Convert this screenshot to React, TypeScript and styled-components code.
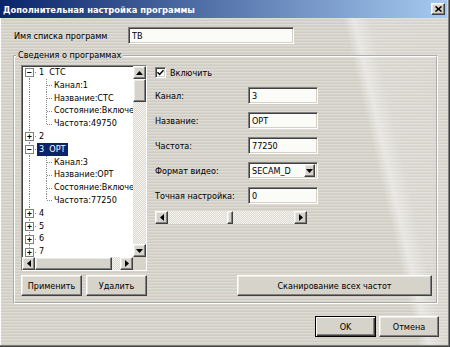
import React from 'react';
import styled, { createGlobalStyle, css } from 'styled-components';

const GlobalStyle = createGlobalStyle`
  html, body {
    margin: 0;
    padding: 0;
    background: #d6d3ca;
  }
  body {
    font-family: "DejaVu Sans Condensed", "DejaVu Sans", sans-serif;
    font-size: 9px;
    color: #000;
  }
`;

const FACE = '#d6d3cb';

const sunken = css`
  border: 1px solid;
  border-color: #808080 #ffffff #ffffff #808080;
  box-shadow: inset 1px 1px 0 #404040, inset -1px -1px 0 #d4d0c8;
`;

const raised = css`
  border: 1px solid;
  border-color: #ffffff #404040 #404040 #ffffff;
  box-shadow: inset -1px -1px 0 #808080, inset 1px 1px 0 #ebe9e3;
`;

const checker = css`
  background: repeating-conic-gradient(#f4f3ef 0 25%, #dcd9d1 0 50%) 0 0 / 2px 2px;
`;

const dotsV = 'repeating-linear-gradient(to bottom, #8a8a8a 0 1px, transparent 1px 2px)';
const dotsH = 'repeating-linear-gradient(to right, #8a8a8a 0 1px, transparent 1px 2px)';

type Channel = {
  num: string;
  name?: string;
  selected?: boolean;
  kids?: string[];
};

const channels: Channel[] = [
  { num: '1', name: 'СТС', kids: ['Канал:1', 'Название:СТС', 'Состояние:Включено', 'Частота:49750'] },
  { num: '2' },
  { num: '3', name: 'ОРТ', selected: true, kids: ['Канал:3', 'Название:ОРТ', 'Состояние:Включено', 'Частота:77250'] },
  { num: '4' },
  { num: '5' },
  { num: '6' },
  { num: '7' },
];

const fields = [
  { label: 'Канал:', value: '3' },
  { label: 'Название:', value: 'ОРТ' },
  { label: 'Частота:', value: '77250' },
];

const Arrow = ({ dir }: { dir: 'up' | 'down' | 'left' | 'right' }) => {
  const pts = {
    up: '0,4 3.5,0 7,4',
    down: '0,0 7,0 3.5,4',
    left: '4,0 4,7 0,3.5',
    right: '0,0 4,3.5 0,7',
  }[dir];
  const vertical = dir === 'up' || dir === 'down';
  return (
    <svg width={vertical ? 7 : 4} height={vertical ? 4 : 7} viewBox={vertical ? '0 0 7 4' : '0 0 4 7'}>
      <polygon points={pts} fill="#000" />
    </svg>
  );
};

const App = () => {
  const tuning = 47; // slider position, percent

  return (
    <>
      <GlobalStyle />
      <Window>
        <TitleBar>
          <TitleText>Дополнительная настройка программы</TitleText>
          <CloseButton>
            <svg width="7" height="6" viewBox="0 0 7 6">
              <path d="M0.5 0.5 L6.5 5.5 M6.5 0.5 L0.5 5.5" stroke="#000" strokeWidth="1.6" />
            </svg>
          </CloseButton>
        </TitleBar>

        <NameRow>
          <NameLabel>Имя списка программ</NameLabel>
          <TextField $w={166} value="ТВ" readOnly />
        </NameRow>

        <Group>
          <Legend>Сведения о программах</Legend>
          <MainRow>
            <TreeBox>
              <TreeList>
                {channels.map((ch, i) => (
                  <React.Fragment key={ch.num}>
                    <TreeRow>
                      <Trunk $fromMid={i === 0} $dash>
                        <Expander>{ch.kids ? '−' : '+'}</Expander>
                      </Trunk>
                      <NodeLabel $selected={ch.selected}>
                        {ch.name ? `${ch.num}  ${ch.name}` : ch.num}
                      </NodeLabel>
                    </TreeRow>
                    {ch.kids?.map((kid, k) => (
                      <TreeRow key={kid}>
                        <Trunk />
                        <Branch $last={k === ch.kids!.length - 1} />
                        <NodeLabel>{kid}</NodeLabel>
                      </TreeRow>
                    ))}
                  </React.Fragment>
                ))}
              </TreeList>
              <VScroll>
                <ArrowBtn>
                  <Arrow dir="up" />
                </ArrowBtn>
                <VThumb />
                <Spacer />
                <ArrowBtn>
                  <Arrow dir="down" />
                </ArrowBtn>
              </VScroll>
              <HScroll>
                <ArrowBtn>
                  <Arrow dir="left" />
                </ArrowBtn>
                <HThumb />
                <Spacer />
                <ArrowBtn>
                  <Arrow dir="right" />
                </ArrowBtn>
              </HScroll>
              <Corner />
            </TreeBox>

            <Details>
              <CheckRow>
                <CheckBox>
                  <svg width="7" height="7" viewBox="0 0 7 7">
                    <path d="M0.5 3.2 L2.6 5.4 L6.5 1.2" stroke="#000" strokeWidth="1.5" fill="none" />
                  </svg>
                </CheckBox>
                Включить
              </CheckRow>
              {fields.map((f) => (
                <Field key={f.label}>
                  <FieldLabel>{f.label}</FieldLabel>
                  <TextField $w={70} value={f.value} readOnly />
                </Field>
              ))}
              <Field>
                <FieldLabel>Формат видео:</FieldLabel>
                <Combo>
                  <ComboText>SECAM_D</ComboText>
                  <ComboButton>
                    <Arrow dir="down" />
                  </ComboButton>
                </Combo>
              </Field>
              <Field>
                <FieldLabel>Точная настройка:</FieldLabel>
                <TextField $w={70} value="0" readOnly />
              </Field>
              <Slider>
                <ArrowBtn>
                  <Arrow dir="left" />
                </ArrowBtn>
                <SliderTrack>
                  <div style={{ width: `${tuning}%` }} />
                  <SliderThumb />
                </SliderTrack>
                <ArrowBtn>
                  <Arrow dir="right" />
                </ArrowBtn>
              </Slider>
            </Details>
          </MainRow>

          <ButtonRow>
            <Button $w={61}>Применить</Button>
            <Button $w={61}>Удалить</Button>
            <Button $w={195} $push>
              Сканирование всех частот
            </Button>
          </ButtonRow>
        </Group>

        <Footer>
          <Button $w={61} $default>
            OK
          </Button>
          <Button $w={60}>Отмена</Button>
        </Footer>
      </Window>
    </>
  );
};

const Window = styled.div`
  width: 450px;
  height: 347px;
  box-sizing: border-box;
  display: flex;
  flex-direction: column;
  overflow: hidden;
  background-color: #d6d3ca;
  background-image: linear-gradient(
      77deg,
      rgba(255, 255, 255, 0) 79%,
      rgba(255, 255, 255, 0.45) 81%,
      rgba(255, 255, 255, 0.15) 84%,
      rgba(255, 255, 255, 0.1) 100%
    ),
    repeating-linear-gradient(
      to bottom,
      rgba(255, 255, 255, 0.2) 0 1px,
      rgba(0, 0, 0, 0) 1px 2px,
      rgba(0, 0, 0, 0.035) 2px 3px
    );
  box-shadow: inset -1px -1px 0 #404040, inset -2px -2px 0 #808080, inset 1px 0 0 #ffffff;
`;

const TitleBar = styled.div`
  flex: none;
  height: 18px;
  margin-right: 3px;
  padding: 0 2px 0 3px;
  display: flex;
  align-items: center;
  justify-content: space-between;
  background: linear-gradient(to right, #0a246a, #a6caf0);
`;

const TitleText = styled.span`
  color: #fff;
  font-weight: bold;
  font-size: 9.3px;
  white-space: nowrap;
`;

const CloseButton = styled.div`
  width: 14px;
  height: 12px;
  box-sizing: border-box;
  ${raised};
  background: ${FACE};
  display: flex;
  align-items: center;
  justify-content: center;
`;

const NameRow = styled.div`
  display: flex;
  align-items: center;
  height: 17px;
  margin: 9px 0 0 14px;
`;

const NameLabel = styled.span`
  width: 114px;
  flex: none;
`;

const TextField = styled.input<{ $w: number }>`
  width: ${(p) => p.$w}px;
  height: 17px;
  box-sizing: border-box;
  margin: 0;
  padding: 0 0 0 3px;
  ${sunken};
  background: #fbfbf8;
  font: inherit;
  color: #000;
  outline: none;
`;

const Group = styled.fieldset`
  min-width: 0;
  margin: 6px 12px 0 13px;
  padding: 4px 4px 6px 6px;
  border: 2px groove #ffffff;
  display: flex;
  flex-direction: column;
  gap: 4px;
`;

const Legend = styled.legend`
  margin-left: -5px;
  padding: 0 2px;
  line-height: 11px;
`;

const MainRow = styled.div`
  display: flex;
  gap: 8px;
`;

const TreeBox = styled.div`
  width: 126px;
  height: 206px;
  box-sizing: border-box;
  ${sunken};
  background: #fff;
  display: grid;
  grid-template-columns: minmax(0, 1fr) 13px;
  grid-template-rows: minmax(0, 1fr) 13px;
`;

const TreeList = styled.div`
  overflow: hidden;
  min-width: 0;
  min-height: 0;
`;

const TreeRow = styled.div`
  display: flex;
  height: 12.8px;
  line-height: 12.8px;
  white-space: nowrap;
`;

const Trunk = styled.span<{ $fromMid?: boolean; $dash?: boolean }>`
  position: relative;
  flex: none;
  width: 15px;

  &::before {
    content: '';
    position: absolute;
    left: 7px;
    width: 1px;
    top: ${(p) => (p.$fromMid ? '50%' : '0')};
    bottom: 0;
    background: ${dotsV};
  }

  &::after {
    content: ${(p) => (p.$dash ? "''" : 'none')};
    position: absolute;
    left: 11px;
    right: 0;
    top: 50%;
    height: 1px;
    background: ${dotsH};
  }
`;

const Branch = styled.span<{ $last?: boolean }>`
  position: relative;
  flex: none;
  width: 15px;

  &::before {
    content: '';
    position: absolute;
    left: 9px;
    width: 1px;
    top: 0;
    bottom: ${(p) => (p.$last ? '50%' : '0')};
    background: ${dotsV};
  }

  &::after {
    content: '';
    position: absolute;
    left: 10px;
    right: 0;
    top: 50%;
    height: 1px;
    background: ${dotsH};
  }
`;

const Expander = styled.span`
  position: absolute;
  z-index: 1;
  left: 3px;
  top: 50%;
  width: 9px;
  height: 9px;
  margin-top: -4px;
  box-sizing: border-box;
  border: 1px solid #808080;
  background: #fff;
  display: flex;
  align-items: center;
  justify-content: center;
  font-family: "DejaVu Sans Mono", monospace;
  font-size: 8px;
  line-height: 7px;
  font-weight: bold;
`;

const NodeLabel = styled.span<{ $selected?: boolean }>`
  padding: 0 2px;
  white-space: pre;
  background: ${(p) => (p.$selected ? '#0a246a' : 'transparent')};
  color: ${(p) => (p.$selected ? '#fff' : '#000')};
`;

const VScroll = styled.div`
  display: flex;
  flex-direction: column;
  ${checker};
`;

const HScroll = styled.div`
  display: flex;
  ${checker};
`;

const Corner = styled.div`
  background: ${FACE};
`;

const ArrowBtn = styled.div`
  flex: none;
  width: 13px;
  height: 13px;
  box-sizing: border-box;
  ${raised};
  background: ${FACE};
  display: flex;
  align-items: center;
  justify-content: center;
`;

const VThumb = styled.div`
  flex: none;
  height: 23px;
  box-sizing: border-box;
  ${raised};
  background: ${FACE};
`;

const HThumb = styled.div`
  flex: none;
  width: 77px;
  box-sizing: border-box;
  ${raised};
  background: ${FACE};
`;

const Spacer = styled.div`
  flex: 1;
`;

const Details = styled.div`
  display: flex;
  flex-direction: column;
  width: 164px;
  padding-top: 1px;
`;

const CheckRow = styled.div`
  display: flex;
  align-items: center;
  gap: 4px;
  height: 13px;
  margin-bottom: 8px;
`;

const CheckBox = styled.span`
  width: 11px;
  height: 11px;
  box-sizing: border-box;
  ${sunken};
  background: #fff;
  display: flex;
  align-items: center;
  justify-content: center;
`;

const Field = styled.div`
  display: flex;
  align-items: center;
  height: 17px;
  margin-bottom: 8px;
`;

const FieldLabel = styled.span`
  width: 93px;
  flex: none;
`;

const Combo = styled.div`
  width: 70px;
  height: 17px;
  box-sizing: border-box;
  ${sunken};
  background: #fbfbf8;
  display: flex;
  align-items: center;
  padding: 2px 2px 2px 3px;
`;

const ComboText = styled.span`
  flex: 1;
`;

const ComboButton = styled(ArrowBtn)`
  width: 11px;
  height: 13px;
`;

const Slider = styled.div`
  display: flex;
  width: 152px;
  height: 13px;
  margin-top: -1px;
`;

const SliderTrack = styled.div`
  flex: 1;
  display: flex;
  ${checker};
`;

const SliderThumb = styled.div`
  width: 6px;
  box-sizing: border-box;
  ${raised};
  background: ${FACE};
`;

const ButtonRow = styled.div`
  display: flex;
  gap: 4px;
`;

const Button = styled.button<{ $w: number; $default?: boolean; $push?: boolean }>`
  width: ${(p) => p.$w}px;
  height: 21px;
  margin: 0 0 0 ${(p) => (p.$push ? 'auto' : '0')};
  padding: 0;
  box-sizing: border-box;
  background: ${FACE};
  font: inherit;
  color: #000;
  ${(p) =>
    p.$default
      ? css`
          border: 1px solid #000;
          box-shadow: inset 1px 1px 0 #fff, inset -1px -1px 0 #404040, inset -2px -2px 0 #808080;
        `
      : raised};
`;

const Footer = styled.div`
  display: flex;
  justify-content: flex-end;
  gap: 3px;
  margin: 12px 11px 0 0;
`;

export default App;
